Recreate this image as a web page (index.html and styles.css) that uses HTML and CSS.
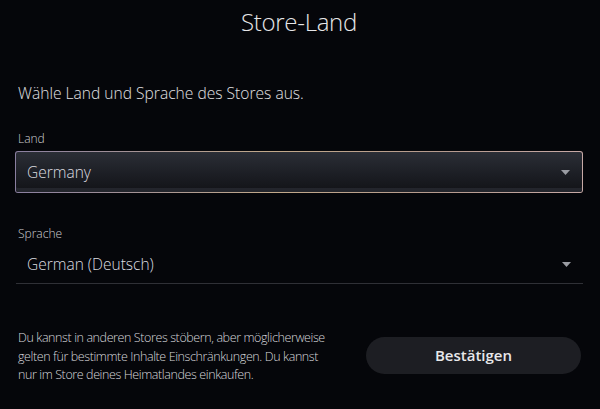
FILE: index.html
```html
<!DOCTYPE html>
<html lang="de">
<head>
<meta charset="utf-8">
<link rel="stylesheet" href="styles.css">
</head>
<body>
<div class="page">
  <h1 class="title">Store-Land</h1>
  <p class="intro">Wähle Land und Sprache des Stores aus.</p>
  <div class="field">
    <div class="label">Land</div>
    <div class="select focused">
      <span>Germany</span>
      <svg class="arrow" width="9" height="5" viewBox="0 0 9 5"><path d="M0 0h9L4.5 5z" fill="#9a9ca3"/></svg>
    </div>
  </div>
  <div class="field lang">
    <div class="label">Sprache</div>
    <div class="select plain">
      <span>German (Deutsch)</span>
      <svg class="arrow" width="9" height="5" viewBox="0 0 9 5"><path d="M0 0h9L4.5 5z" fill="#9a9ca3"/></svg>
    </div>
  </div>
  <div class="footer">
    <p class="note">Du kannst in anderen Stores stöbern, aber möglicherweise gelten für bestimmte Inhalte Einschränkungen. Du kannst nur im Store deines Heimatlandes einkaufen.</p>
    <button class="confirm">Bestätigen</button>
  </div>
  <div class="ghost">
    <span class="g1">Erzählen</span>
    <span class="g2">Installiert</span>
    <span class="g3">In Bibliothek</span>
    <span class="g4">Kosten</span>
  </div>
</div>
</body>
</html>
```
FILE: styles.css
```css
html, body {
  margin: 0;
  padding: 0;
  background: #05060a;
}
body {
  width: 600px;
  height: 409px;
  overflow: hidden;
  font-family: "Open Sans", "Liberation Sans", sans-serif;
  color: #e2e2e4;
}
.page {
  position: relative;
  height: 409px;
  padding: 0 17px 0 15px;
  box-sizing: border-box;
  display: flex;
  flex-direction: column;
}
.title {
  margin: 6px 0 0;
  text-align: center;
  font-weight: 300;
  font-size: 24px;
  line-height: 32px;
  color: #e6e6e8;
  letter-spacing: -0.3px;
}
.intro {
  margin: 45px 0 0 3px;
  font-size: 15.6px;
  font-weight: 300;
  line-height: 20px;
  color: #e0e0e2;
}
.field { margin-top: 28px; }
.field.lang { margin-top: 33px; }
.label {
  margin-left: 3px;
  font-size: 12px;
  font-weight: 300;
  line-height: 16px;
  color: #cfcfd3;
}
.select {
  display: flex;
  align-items: center;
  justify-content: space-between;
  font-size: 15.5px;
  font-weight: 300;
  color: #dcdde0;
}
.select.focused {
  margin-top: 4px;
  height: 40px;
  padding: 0 12px 0 11px;
  border: 1px solid transparent;
  border-radius: 3px;
  background:
    linear-gradient(180deg, #2b2e36 0%, #1b1d23 60%, #121317 100%) padding-box,
    linear-gradient(90deg, #8a7fa0 0%, #c2a98a 45%, #b59a8e 75%, #c7a9a6 100%) border-box;
  box-shadow: inset 0 -4px 0 #23252c;
}
.select.plain {
  margin: 2px 0 0 1px;
  height: 39px;
  padding: 0 12px 0 11px;
  border-bottom: 1px solid #2f3036;
}
.arrow { flex: none; margin-top: 1px; }
.footer {
  margin-top: 45px;
  display: flex;
  align-items: center;
  justify-content: space-between;
}
.note {
  margin: 0 0 0 3px;
  width: 310px;
  font-size: 12.5px;
  font-weight: 300;
  line-height: 18.5px;
  letter-spacing: -0.4px;
  color: #d6d6da;
}
.confirm {
  width: 215px;
  height: 37px;
  margin-right: 2px;
  margin-top: -3px;
  border: none;
  border-radius: 19px;
  background: #1d1e23;
  color: #e8e8ea;
  font-family: "Open Sans", "Liberation Sans", sans-serif;
  font-weight: 600;
  font-size: 15px;
}
.ghost {
  position: absolute;
  left: 0;
  right: 0;
  bottom: 0;
  height: 30px;
  font-size: 11px;
  color: #17181d;
  font-weight: 600;
  z-index: -1;
}
.ghost span { position: absolute; top: 10px; }
.g1 { left: 80px; }
.g2 { left: 230px; }
.g3 { left: 398px; }
.g4 { left: 555px; }
```
